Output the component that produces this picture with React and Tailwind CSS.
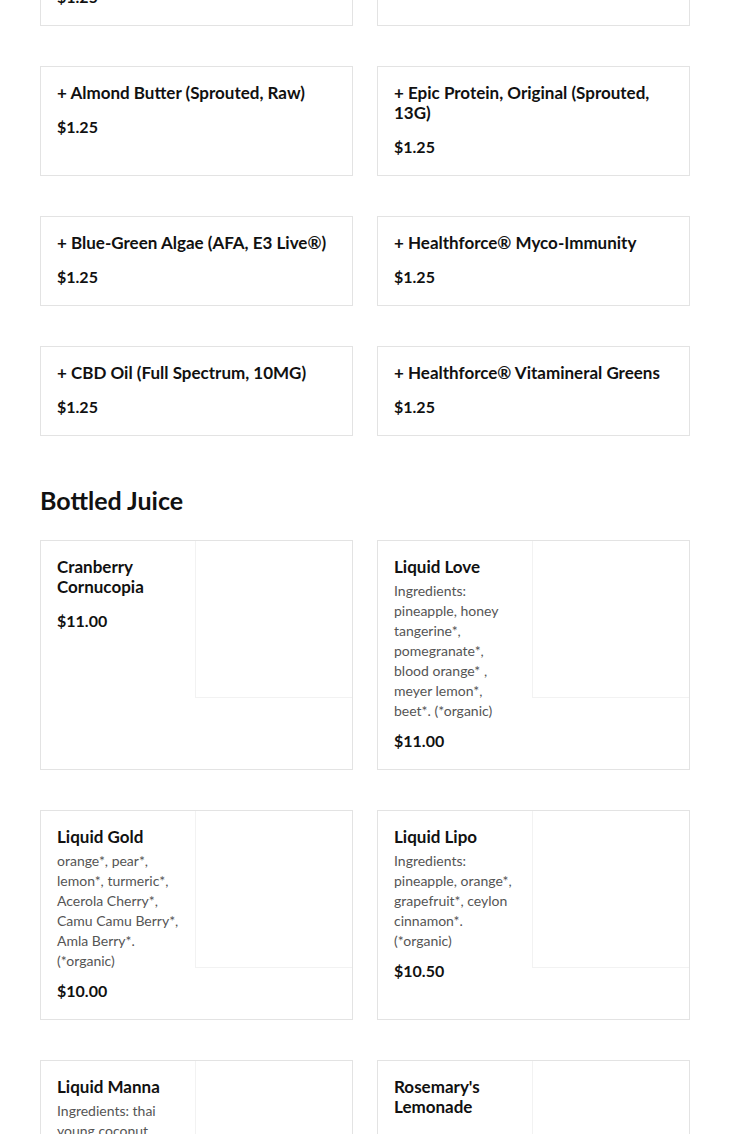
const addons = [
  { left: '+ Ashwagandha Root Powder (Organic, Wildcrafted)', right: '+ Bee Pollen (Raw)' },
  { left: '+ Almond Butter (Sprouted, Raw)', right: '+ Epic Protein, Original (Sprouted, 13G)' },
  { left: '+ Blue-Green Algae (AFA, E3 Live®)', right: '+ Healthforce® Myco-Immunity' },
  { left: '+ CBD Oil (Full Spectrum, 10MG)', right: '+ Healthforce® Vitamineral Greens' },
];

const juices = [
  { name: 'Cranberry Cornucopia', price: '$11.00' },
  {
    name: 'Liquid Love',
    desc: 'Ingredients: pineapple, honey tangerine*, pomegranate*, blood orange* , meyer lemon*, beet*. (*organic)',
    price: '$11.00',
  },
  {
    name: 'Liquid Gold',
    desc: 'orange*, pear*, lemon*, turmeric*, Acerola Cherry*, Camu Camu Berry*, Amla Berry*. (*organic)',
    price: '$10.00',
  },
  {
    name: 'Liquid Lipo',
    desc: 'Ingredients: pineapple, orange*, grapefruit*, ceylon cinnamon*. (*organic)',
    price: '$10.50',
  },
  {
    name: 'Liquid Manna',
    desc: 'Ingredients: thai young coconut water*, raw honey*, sea salt. (*organic)',
    price: '$10.00',
  },
  { name: "Rosemary's Lemonade", price: '$9.00' },
];

const AddonCard = ({ title }) => (
  <div className="border border-[#e3e3e3] bg-white px-4 pt-4 pb-[18px]">
    <h3 className="text-[17px] leading-5 font-bold text-[#111]">{title}</h3>
    <p className="mt-[14px] text-[16px] leading-5 font-bold text-[#111]">$1.25</p>
  </div>
);

const JuiceCard = ({ item }) => (
  <div className="flex border border-[#e3e3e3] bg-white">
    <div className="w-[154px] shrink-0 pl-4 pr-3 pt-4 pb-[18px]">
      <h3 className="text-[17px] leading-5 font-bold text-[#111]">{item.name}</h3>
      {item.desc && (
        <p className="mt-1 text-[14px] leading-5 text-[#555]">{item.desc}</p>
      )}
      <p className={`${item.desc ? 'mt-2.5' : 'mt-[14px]'} text-[16px] leading-5 font-bold text-[#111]`}>
        {item.price}
      </p>
    </div>
    <div className="h-[157px] flex-1 border-l border-b border-[#f2f2f2]" />
  </div>
);

export default function App() {
  return (
    <div className="min-h-screen overflow-hidden bg-white font-['Lato','Liberation_Sans',sans-serif]">
      <div className="-mt-[84px] px-10 pb-10">
        <div className="grid grid-cols-2 gap-x-6 gap-y-10">
          {addons.map((row, i) => (
            <div key={i} className="contents">
              <AddonCard title={row.left} />
              <AddonCard title={row.right} />
            </div>
          ))}
        </div>

        <h2 className="mt-[49px] mb-[25px] text-[25px] leading-[30px] font-bold text-[#111]">
          Bottled Juice
        </h2>

        <div className="grid grid-cols-2 gap-x-6 gap-y-10">
          {juices.map((j) => (
            <JuiceCard key={j.name} item={j} />
          ))}
        </div>
      </div>
    </div>
  );
}
